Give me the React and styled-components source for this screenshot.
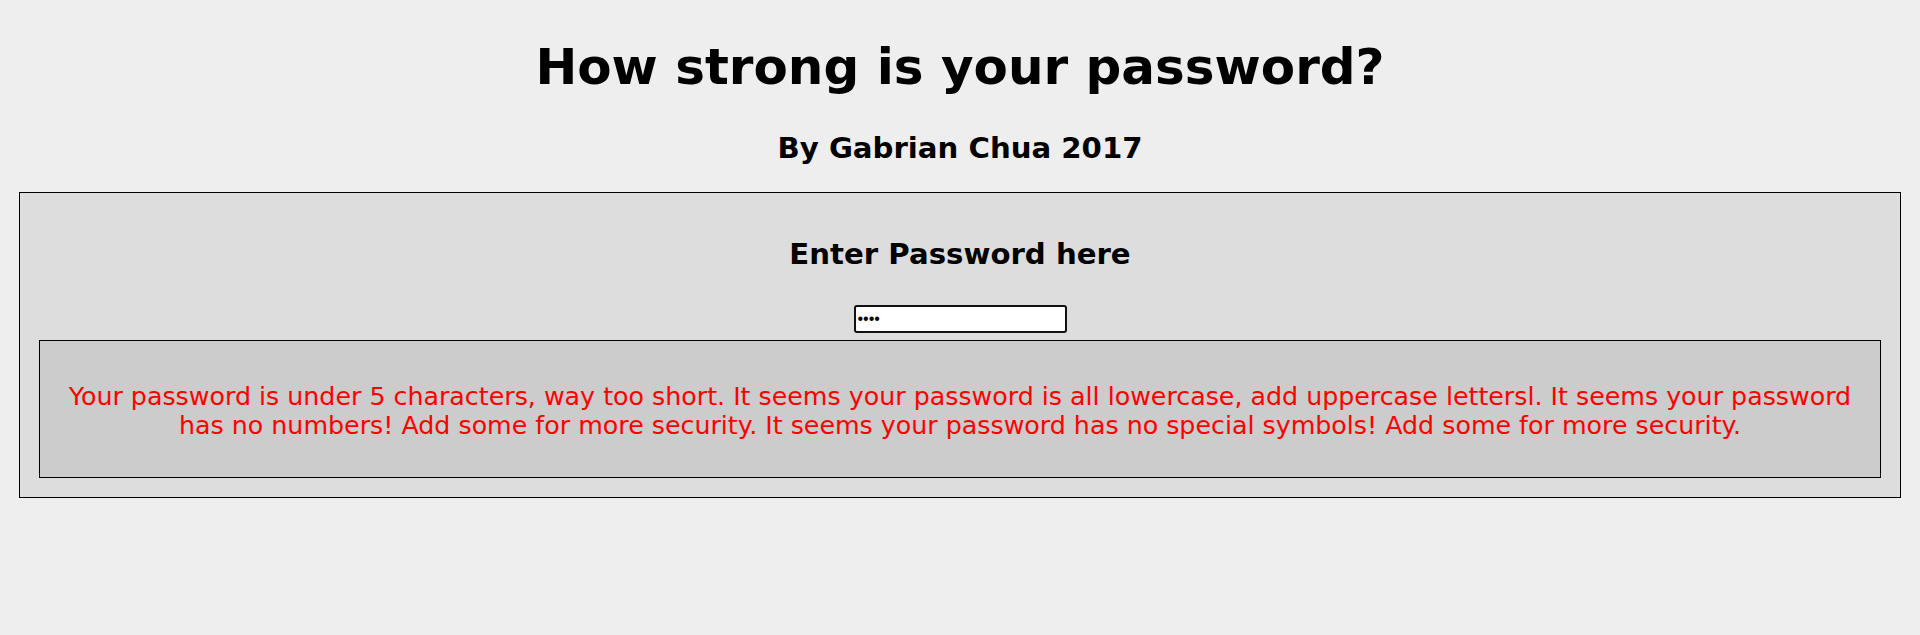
import React from "react";
import styled, { createGlobalStyle } from "styled-components";

const Global = createGlobalStyle`
  html, body { margin: 0; padding: 0; background: #eeeeee; }
  body { font-family: "DejaVu Sans", Verdana, sans-serif; color: #000; }
`;

const Page = styled.main`
  display: flex;
  flex-direction: column;
  align-items: stretch;
  padding-top: 38px;
`;

const Title = styled.h1`
  margin: 0;
  text-align: center;
  font-size: 50px;
  line-height: 58px;
  font-weight: bold;
`;

const Byline = styled.h2`
  margin: 35px 0 0;
  text-align: center;
  font-size: 29.2px;
  line-height: 34px;
  font-weight: bold;
`;

const Panel = styled.section`
  margin: 27px 19px 0;
  background: #dddddd;
  border: 1px solid #000;
  padding: 44px 19px 19px;
  display: flex;
  flex-direction: column;
  align-items: center;
`;

const Label = styled.h3`
  margin: 0;
  font-size: 29.2px;
  line-height: 34px;
  font-weight: bold;
  text-align: center;
`;

const PasswordInput = styled.input`
  box-sizing: border-box;
  margin-top: 34px;
  width: 213px;
  height: 28px;
  border: 2.5px solid #111;
  border-radius: 3px;
  background: #fff;
  padding: 0 2px;
  font-family: Arial, "Liberation Sans", sans-serif;
  font-size: 16px;
  color: #000;
  outline: none;
`;

const Feedback = styled.div`
  box-sizing: border-box;
  align-self: stretch;
  margin-top: 7px;
  background: #cccccc;
  border: 1px solid #000;
  padding: 41px 24px 36px;
  min-height: 138px;
`;

const Message = styled.p`
  margin: 0;
  color: #ff0000;
  font-size: 25.3px;
  line-height: 29.4px;
  text-align: center;
`;

export default function App() {
  return (
    <>
      <Global />
      <Page>
        <Title>How strong is your password?</Title>
        <Byline>By Gabrian Chua 2017</Byline>
        <Panel>
          <Label>Enter Password here</Label>
          <PasswordInput type="password" defaultValue="abcd" readOnly />
          <Feedback>
            <Message>
              Your password is under 5 characters, way too short. It seems your password is all lowercase, add uppercase lettersl. It seems your password has no numbers! Add some for more security. It seems your password has no special symbols! Add some for more security.
            </Message>
          </Feedback>
        </Panel>
      </Page>
    </>
  );
}
